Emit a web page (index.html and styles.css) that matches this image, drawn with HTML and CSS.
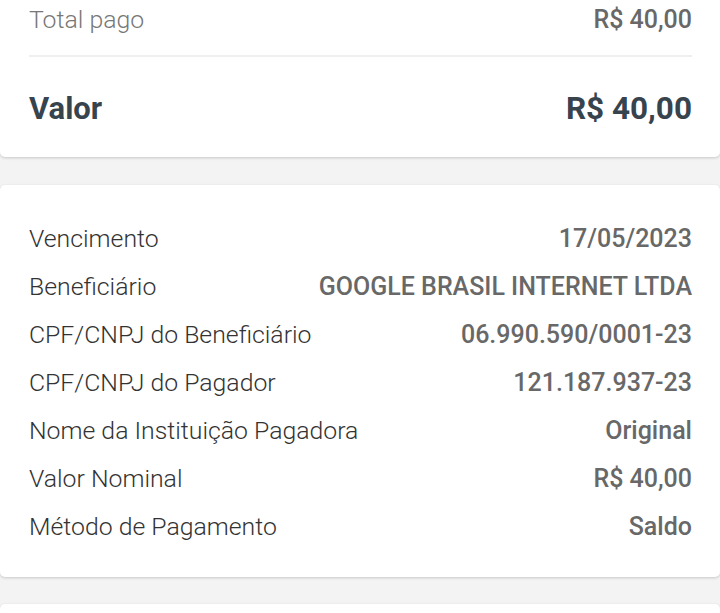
FILE: index.html
```html
<!DOCTYPE html>
<html lang="pt-BR">
<head>
<meta charset="utf-8">
<link rel="stylesheet" href="styles.css">
</head>
<body>
<div class="page">
  <section class="card card-top">
    <div class="row row-total">
      <span class="label muted">Total pago</span>
      <span class="value">R$ 40,00</span>
    </div>
    <div class="divider"></div>
    <div class="row row-valor">
      <span class="label-strong">Valor</span>
      <span class="value-strong">R$ 40,00</span>
    </div>
  </section>

  <section class="card card-details">
    <div class="row"><span class="label">Vencimento</span><span class="value">17/05/2023</span></div>
    <div class="row"><span class="label">Beneficiário</span><span class="value">GOOGLE BRASIL INTERNET LTDA</span></div>
    <div class="row"><span class="label">CPF/CNPJ do Beneficiário</span><span class="value">06.990.590/0001-23</span></div>
    <div class="row"><span class="label">CPF/CNPJ do Pagador</span><span class="value">121.187.937-23</span></div>
    <div class="row"><span class="label">Nome da Instituição Pagadora</span><span class="value">Original</span></div>
    <div class="row"><span class="label">Valor Nominal</span><span class="value">R$ 40,00</span></div>
    <div class="row"><span class="label">Método de Pagamento</span><span class="value">Saldo</span></div>
  </section>

  <section class="card card-next"></section>
</div>
</body>
</html>
```
FILE: styles.css
```css
* { box-sizing: border-box; }
html, body {
  margin: 0;
  padding: 0;
  background: #f3f3f3;
  font-family: Roboto, "Liberation Sans", sans-serif;
  overflow: hidden;
}
.page {
  display: flex;
  flex-direction: column;
  gap: 28px;
  margin-top: -21px;
}
.card {
  background: #fff;
  border-radius: 5px;
  box-shadow: 0 1px 3px rgba(0,0,0,0.18);
  padding: 0 28px 0 29px;
}
.card-top {
  border-top-left-radius: 0;
  border-top-right-radius: 0;
  padding-top: 20px;
}
.row {
  display: flex;
  justify-content: space-between;
  align-items: center;
  height: 48px;
}
.row-total { height: 40px; }
.label {
  font-size: 24.8px;
  font-weight: 300;
  color: #333;
}
.label.muted { color: #777; }
.value {
  font-size: 25px;
  font-weight: 500;
  color: #686868;
}
.divider {
  height: 2px;
  background: #efefef;
  margin-top: 16px;
}
.row-valor {
  height: 100px;
  padding-top: 2px;
}
.label-strong, .value-strong {
  font-size: 31px;
  font-weight: 700;
  color: #37444e;
}
.value-strong { font-size: 31.5px; }
.card-details {
  padding-top: 29px;
  padding-bottom: 27px;
}
.card-next {
  height: 40px;
  margin-top: -1px;
}
```
